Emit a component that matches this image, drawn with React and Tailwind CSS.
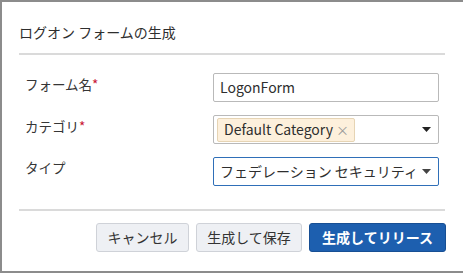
export default function App() {
  const font = { fontFamily: '"Noto Sans CJK JP", "Noto Sans", sans-serif' };
  return (
    <div
      style={font}
      className="w-[463px] h-[273px] bg-white border-l-2 border-t-2 border-b-2 border-[#8c8c8c] text-[#2e2e2e] overflow-hidden"
    >
      <div className="pl-[17px] pr-[18px]">
        <div className="h-[53px] pt-[20px] text-[14px] leading-[20px] border-b-2 border-[#dadada]">
          ログオン フォームの生成
        </div>

        <div className="pt-[18px] pl-[6px] pr-[6px] flex flex-col gap-[13px]">
          <div className="flex h-[29px]">
            <div className="w-[188px] text-[13.5px] leading-[20px] pt-[1px] text-[#363636]">
              フォーム名<span className="text-[#c8102e]">*</span>
            </div>
            <div className="flex-1 border border-[#b9b9b9] rounded-[2px] flex items-center px-[6px] text-[14px]">
              LogonForm
            </div>
          </div>

          <div className="flex h-[29px]">
            <div className="w-[188px] text-[13.5px] leading-[20px] pt-[1px] text-[#363636]">
              カテゴリ<span className="text-[#c8102e]">*</span>
            </div>
            <div className="flex-1 border border-[#b9b9b9] rounded-[2px] flex items-center pl-[3px] pr-[7px]">
              <div className="h-[24px] pl-[6px] pr-[5px] flex items-center gap-[3px] bg-[#fdf0dc] border border-[#e6d4b4] rounded-[2px] text-[14px]">
                <span>Default Category</span>
                <span className="text-[#999] text-[13px]">×</span>
              </div>
              <div className="flex-1" />
              <svg width="9" height="5" viewBox="0 0 9 5"><path d="M0 0h9L4.5 5z" fill="#222" /></svg>
            </div>
          </div>

          <div className="flex h-[29px]">
            <div className="w-[188px] text-[13.5px] leading-[20px] text-[#363636]">
              タイプ
            </div>
            <div className="flex-1 border border-[#2f6fb8] rounded-[2px] flex items-center pl-[6px] pr-[7px] text-[14px]">
              <span className="flex-1 whitespace-nowrap overflow-hidden">フェデレーション セキュリティ</span>
              <svg width="9" height="5" viewBox="0 0 9 5"><path d="M0 0h9L4.5 5z" fill="#444" /></svg>
            </div>
          </div>
        </div>

        <div className="mt-[23px] border-b-2 border-[#dadada]" />

        <div className="mt-[12px] flex justify-end gap-[7px] mr-[-1px] text-[14px]">
          <button className="w-[93px] h-[29px] bg-[#eef0f4] border border-[#cfd2d8] rounded-[3px] text-[#333]">
            キャンセル
          </button>
          <button className="w-[106px] h-[29px] bg-[#eef0f4] border border-[#cfd2d8] rounded-[3px] text-[#333]">
            生成して保存
          </button>
          <button className="w-[137px] h-[29px] bg-[#1d5faf] border border-[#174f94] rounded-[3px] text-white font-bold">
            生成してリリース
          </button>
        </div>
      </div>
    </div>
  );
}
